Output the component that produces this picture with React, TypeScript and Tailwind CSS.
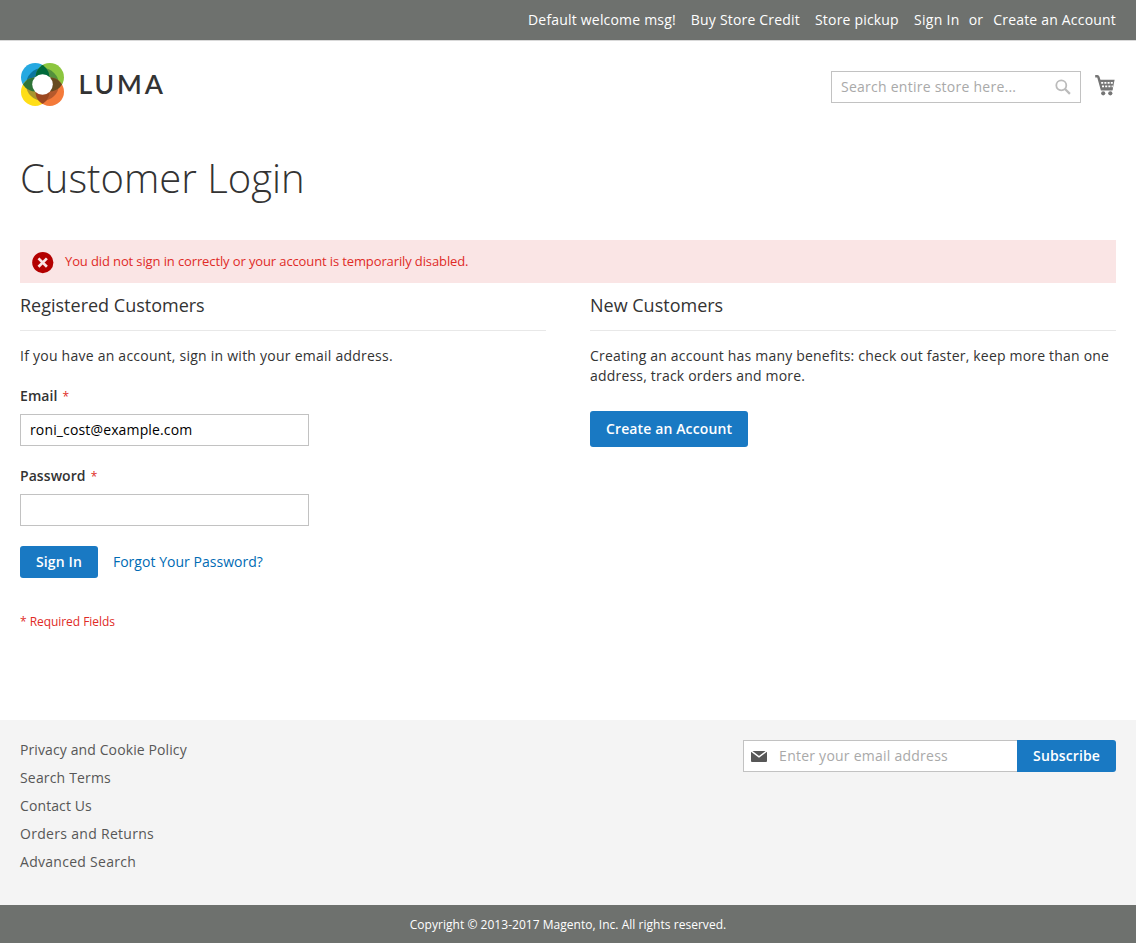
import React from "react";

function LumaMark() {
  return (
    <svg width="44" height="44" viewBox="-22.5 -22.5 44 44" className="shrink-0">
      <defs>
        <clipPath id="tl"><circle cx="-7.3" cy="-7.3" r="14.2" /></clipPath>
        <clipPath id="tr"><circle cx="7.3" cy="-7.3" r="14.2" /></clipPath>
        <clipPath id="bl"><circle cx="-7.3" cy="7.3" r="14.2" /></clipPath>
        <clipPath id="ring"><circle r="16.4" /></clipPath>
      </defs>
      <circle cx="-7.3" cy="-7.3" r="14.2" fill="#26a9e1" />
      <circle cx="7.3" cy="-7.3" r="14.2" fill="#8cc63f" />
      <circle cx="-7.3" cy="7.3" r="14.2" fill="#ffde17" />
      <circle cx="7.3" cy="7.3" r="14.2" fill="#f47a3a" />
      <g clipPath="url(#ring)">
        <circle cx="-7.3" cy="-7.3" r="14.2" fill="#0c76a0" />
        <circle cx="7.3" cy="-7.3" r="14.2" fill="#54903c" />
        <circle cx="-7.3" cy="7.3" r="14.2" fill="#a8952e" />
        <circle cx="7.3" cy="7.3" r="14.2" fill="#b5592c" />
      </g>
      <circle cx="7.3" cy="-7.3" r="14.2" fill="#00693a" clipPath="url(#tl)" />
      <circle cx="-7.3" cy="7.3" r="14.2" fill="#2e7438" clipPath="url(#tl)" />
      <circle cx="7.3" cy="7.3" r="14.2" fill="#674b20" clipPath="url(#tr)" />
      <circle cx="7.3" cy="7.3" r="14.2" fill="#9c4820" clipPath="url(#bl)" />
      <circle r="10.3" fill="#fff" />
    </svg>
  );
}

function CartIcon() {
  return (
    <svg width="21" height="21" viewBox="0 0 21 21" fill="none">
      <path d="M.2 1.3h2.2c.5 0 .8.3 1 .8L6.8 14.4h10.7" stroke="#757575" strokeWidth="2.4" />
      <path d="M4 4.8h15.6l-2 10H6.5z" fill="#757575" />
      <path d="M6.2 7.9h12M7 11.4h10.8" stroke="#fff" strokeWidth="1.9" strokeDasharray="2 1.2" />
      <circle cx="8.2" cy="18.3" r="2.1" fill="#757575" />
      <circle cx="15.3" cy="18.3" r="2.1" fill="#757575" />
    </svg>
  );
}

const button = "flex items-center bg-[#1979c3] px-4 font-semibold tracking-[0.12px] text-white";
const input = "h-8 w-[289px] border border-[#c2c2c2] bg-white px-[9px] pb-[2px] tracking-[0.14px] text-black outline-none";
const footerLinks = [
  { label: "Privacy and Cookie Policy", spacing: "tracking-[0.11px]" },
  { label: "Search Terms", spacing: "tracking-[0.17px]" },
  { label: "Contact Us", spacing: "tracking-[0.1px]" },
  { label: "Orders and Returns", spacing: "tracking-[0.3px]" },
  { label: "Advanced Search", spacing: "tracking-[0.28px]" },
];

function SectionTitle({ children }: { children: React.ReactNode }) {
  return <h2 className="mb-[15px] h-[38px] border-b border-[#e8e8e8] pt-[2px] text-lg leading-5">{children}</h2>;
}

function Label({ children }: { children: React.ReactNode }) {
  return (
    <label className="mb-2 block h-5 font-semibold tracking-[0.07px]">
      {children}<span className="ml-[5px] text-xs font-normal text-[#e02b27]">*</span>
    </label>
  );
}

export default function App() {
  return (
    <div className="flex h-[943px] flex-col bg-white font-['Open_Sans',sans-serif] text-sm leading-5 text-[#333]">
      <nav className="flex h-[41px] shrink-0 justify-end border-b border-[#d9d9d9] bg-[#6e716e] px-5 pt-[10px] tracking-[0.19px] text-white">
        <span>Default welcome msg!</span>
        <a className="ml-[15px]">Buy Store Credit</a>
        <a className="ml-[15px]">Store pickup</a>
        <a className="ml-[15px] tracking-[0.33px]">Sign In</a>
        <span className="ml-[9px]">or</span>
        <a className="ml-[10px]">Create an Account</a>
      </nav>

      <header className="flex h-[109px] shrink-0 justify-between px-5">
        <a className="mt-[21px] flex h-11">
          <LumaMark />
          <span className="ml-[14.5px] mt-[6px] font-['Lato',sans-serif] text-[26.5px] font-semibold leading-8 tracking-[2.9px] text-[#333]">LUMA</span>
        </a>
        <div className="flex pt-[30px]">
          <div className="flex h-8 w-[250px] items-center justify-between border border-[#c2c2c2] px-[9px]">
            <input className="w-[200px] tracking-[0.25px] outline-none placeholder:text-[#a9a9a9]" placeholder="Search entire store here..." />
            <svg width="16" height="16" viewBox="0 0 16 16" fill="none" stroke="#bbb">
              <circle cx="6.3" cy="6.3" r="5" strokeWidth="1.8" />
              <path d="m10 10 4.9 4.9" strokeWidth="2.2" />
            </svg>
          </div>
          <a className="ml-[14px] mt-1"><CartIcon /></a>
        </div>
      </header>

      <main className="h-[570px] shrink-0 px-5">
        <h1 className="h-[90px] text-[40px] font-light leading-[56px]">Customer Login</h1>
        <div className="mb-3 flex h-[43px] items-center bg-[#fae5e5] pl-3 text-[13px] text-[#e02b27]">
          <svg width="22" height="22" viewBox="0 0 22 22" className="mr-[11px] mt-[2px]">
            <circle cx="10.8" cy="10.6" r="10.6" fill="#b30000" />
            <path d="m6.5 6.4 8.4 8.4M14.9 6.4l-8.4 8.4" stroke="#fae5e5" strokeWidth="2.7" />
          </svg>
          <span className="-mt-px pb-px tracking-[-0.12px]">You did not sign in correctly or your account is temporarily disabled.</span>
        </div>
        <div className="-mt-[2px] grid grid-cols-[526px_526px] justify-between">
          <section>
            <SectionTitle>Registered Customers</SectionTitle>
            <p className="mb-5 tracking-[0.24px]">If you have an account, sign in with your email address.</p>
            <Label>Email</Label>
            <input className={input + " mb-5 block"} defaultValue="roni_cost@example.com" />
            <Label>Password</Label>
            <input type="password" className={input + " mb-5 block"} />
            <div className="flex items-center">
              <button className={button + " h-8 rounded-[3px]"}>Sign In</button>
              <a className="ml-[15px] tracking-[0.03px] text-[#006bb4]">Forgot Your Password?</a>
            </div>
            <p className="mt-[34px] text-xs leading-5 tracking-[-0.05px] text-[#e02b27]">* Required Fields</p>
          </section>
          <section>
            <SectionTitle>New Customers</SectionTitle>
            <p className="mb-[25px] tracking-[0.195px]">Creating an account has many benefits: check out faster, keep more than one address, track orders and more.</p>
            <button className={button + " h-9 rounded-[3px]"}>Create an Account</button>
          </section>
        </div>
      </main>

      <footer className="flex h-[185px] shrink-0 justify-between bg-[#f4f4f4] px-5 pt-5">
        <ul className="flex flex-col gap-2 text-[#575757]">
          {footerLinks.map(({ label, spacing }) => <li key={label} className={spacing}>{label}</li>)}
        </ul>
        <form className="flex h-8">
          <div className="flex w-[274px] items-center border border-r-0 border-[#c2c2c2] bg-white pl-[7px]">
            <svg width="16" height="12" viewBox="0 0 16 12" className="mr-3">
              <rect y="1" width="16" height="11" rx="1" fill="#575757" />
              <path d="m0 .9 8 6 8-6" fill="none" stroke="#fff" strokeWidth="1.5" />
            </svg>
            <input className="w-[225px] tracking-[0.24px] outline-none placeholder:text-[#a9a9a9]" placeholder="Enter your email address" />
          </div>
          <button className={button + " h-8 rounded-r-[3px]"}>Subscribe</button>
        </form>
      </footer>
      <div className="h-[38px] shrink-0 bg-[#6e716e] pt-[10px] text-center text-xs leading-5 tracking-[0.03px] text-white">
        Copyright © 2013-2017 Magento, Inc. All rights reserved.
      </div>
    </div>
  );
}
